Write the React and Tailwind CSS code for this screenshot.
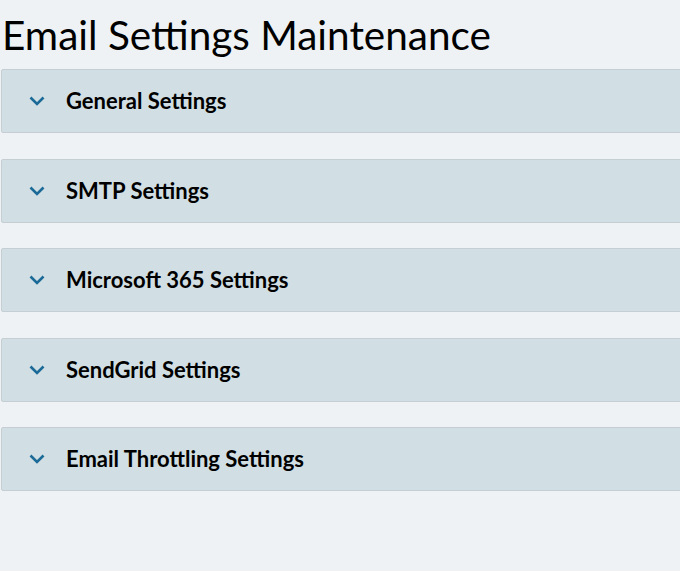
import React from 'react';

const sections = [
    'General Settings',
    'SMTP Settings',
    'Microsoft 365 Settings',
    'SendGrid Settings',
    'Email Throttling Settings',
];

function Chevron() {
    return (
        <svg width="16" height="10" viewBox="0 0 16 10" className="shrink-0">
            <path d="M1.5 1.5 L8 8 L14.5 1.5" fill="none" stroke="#1b6a97" strokeWidth="2.6" />
        </svg>
    );
}

export default function App() {
    return (
        <div
            className="min-h-[571px] w-full overflow-hidden bg-[#eef2f5] text-black"
            style={{ fontFamily: 'Lato, "Open Sans", sans-serif' }}
        >
            <h1 className="pl-[2px] pt-[10px] text-[40.5px] leading-[50px] font-normal">Email Settings Maintenance</h1>
            <div className="mt-[9px] flex flex-col gap-[25.5px]">
                {sections.map((s) => (
                    <div
                        key={s}
                        className="ml-[1px] flex h-[64px] w-[720px] items-center border border-[#c5cfd3] bg-[#d1dee3] rounded-[2px]"
                    >
                        <div className="ml-[27px] mr-[21px] flex items-center">
                            <Chevron />
                        </div>
                        <span className="text-[22px] font-bold leading-[28px]">{s}</span>
                    </div>
                ))}
            </div>
        </div>
    );
}
